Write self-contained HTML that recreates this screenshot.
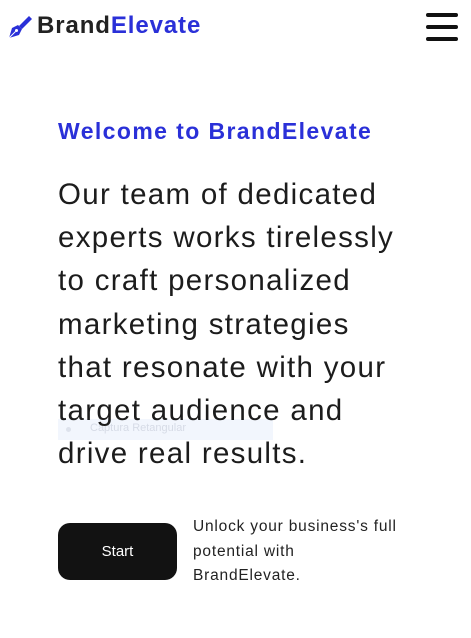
<!DOCTYPE html>
<html><head><meta charset="utf-8"><style>
*{margin:0;padding:0;box-sizing:border-box}
body{width:471px;height:638px;background:#fff;font-family:"Liberation Sans",sans-serif;position:relative;overflow:hidden;color:#1c1c1c}
.logo{position:absolute;left:8px;top:12px;display:flex;align-items:center}
.logo span{font-size:24px;font-weight:bold;letter-spacing:0.9px}
.b{color:#222}.e{color:#2a30d8}
.menu{position:absolute;left:426px;top:13px;width:32px}
.menu div{height:4px;background:#111;border-radius:2px;margin-bottom:8px}
h2{position:absolute;left:58px;top:118px;font-size:23px;color:#2a30d8;font-weight:bold;letter-spacing:1.4px}
.main{position:absolute;left:58px;top:173px;font-size:29.5px;line-height:43.2px;letter-spacing:1.3px;white-space:nowrap;color:#1c1c1c}
.cap{position:absolute;left:58px;top:419px;width:215px;height:21px;background:#f2f6fd;font-size:11px;color:#d6dbe6;padding:3px 0 0 32px}
.cap:before{content:"";position:absolute;left:8px;top:8px;width:5px;height:5px;border-radius:50%;background:#dde2ec}
.btn{position:absolute;left:58px;top:523px;width:119px;height:57px;background:#121212;border-radius:12px;color:#fff;font-size:15px;display:flex;align-items:center;justify-content:center}
.side{position:absolute;left:193px;top:515px;font-size:15.5px;line-height:24.5px;letter-spacing:0.8px;color:#222}
</style></head><body>
<div class="logo">
<svg width="25" height="25" viewBox="0 0 25 25"><path d="M21 2 l3 3 -10 10 -3 -3z" fill="#2a30d8"/><path d="M10 11 l4 4 -3 6 -10 3 3 -10z" fill="#2a30d8"/><circle cx="8.5" cy="16.5" r="1.5" fill="#fff"/><path d="M1 24 L7.5 17.5" stroke="#fff" stroke-width="1"/></svg>
<span class="b" style="margin-left:4px">Brand</span><span class="e">Elevate</span></div>
<div class="menu"><div></div><div></div><div></div></div>
<h2>Welcome to BrandElevate</h2>
<div class="cap">Captura Retangular</div>
<div class="main">Our team of dedicated<br>experts works tirelessly<br>to craft personalized<br>marketing strategies<br>that resonate with your<br>target audience and<br>drive real results.</div>
<div class="btn">Start</div>
<div class="side">Unlock your business's full<br>potential with<br>BrandElevate.</div>
</body></html>
